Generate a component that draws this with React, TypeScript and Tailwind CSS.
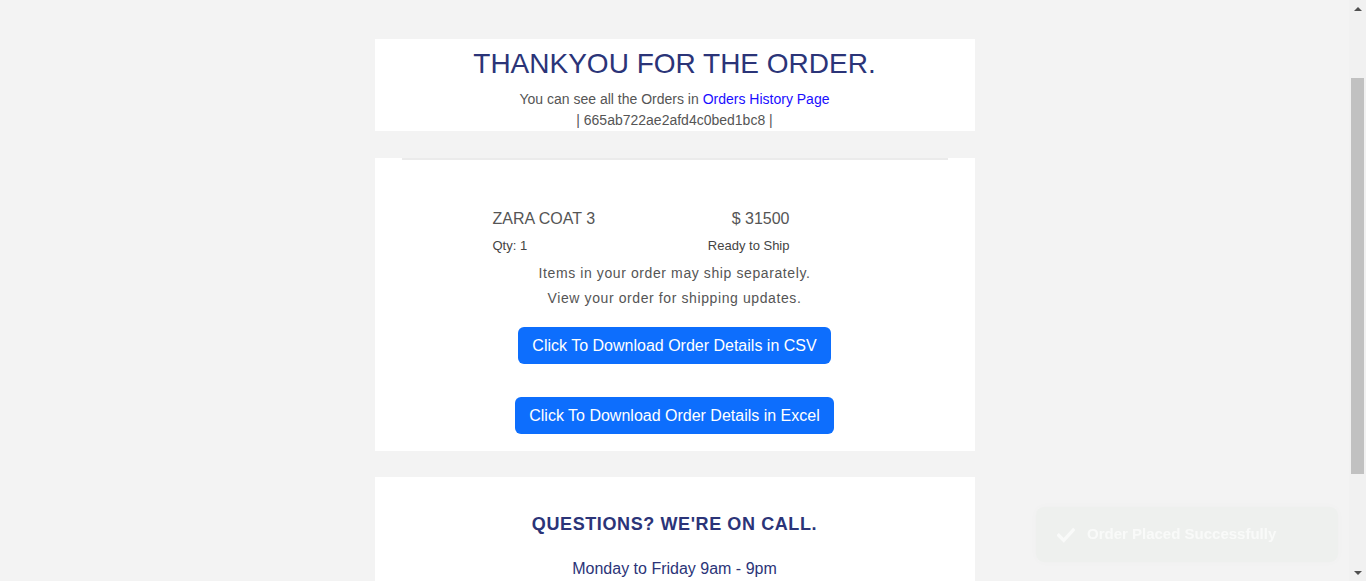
import React from 'react';

const navy = 'text-[#2b3478]';

const Toast = () => (
  <div className="fixed right-[28px] bottom-[19px] w-[302px] h-[55px] rounded-lg bg-[#eef0ee] shadow-[0_0_10px_rgba(0,0,0,0.02)] flex items-center pl-[21px] gap-[12px]">
    <svg width="18" height="18" viewBox="0 0 20 20" fill="none">
      <path d="M2 10.5 L7.5 16 L18 4.5" stroke="#f9faf9" strokeWidth="3.8" strokeLinecap="square" />
    </svg>
    <span className="text-[15px] font-bold text-[#f9faf9]">Order Placed Successfully</span>
  </div>
);

// the browser scrollbar seen in the screenshot
const ScrollBar = () => (
  <div className="fixed top-0 right-0 w-[17px] h-screen bg-[#f1f1f1] flex flex-col items-center">
    <div className="h-[17px] flex items-center justify-center">
      <div className="w-0 h-0 border-l-[4px] border-r-[4px] border-b-[4px] border-l-transparent border-r-transparent border-b-[#505050]" />
    </div>
    <div className="flex-1 w-full px-[2px]">
      <div className="mt-[61px] h-[396px] bg-[#c1c1c1]" />
    </div>
    <div className="h-[17px] flex items-center justify-center">
      <div className="w-0 h-0 border-l-[4px] border-r-[4px] border-t-[4px] border-l-transparent border-r-transparent border-t-[#505050]" />
    </div>
  </div>
);

export default function App() {
  return (
    <div className="min-h-screen bg-[#f3f3f3] pr-[17px] font-['Liberation_Sans',Arial,sans-serif]">
      <div className="w-[600px] mx-auto pt-[39px] pb-[60px] flex flex-col">
        {/* Thank you header */}
        <div className="bg-white pt-[8px] h-[92px] text-center">
          <h1 className={`text-[28px] leading-[34px] ${navy}`}>THANKYOU FOR THE ORDER.</h1>
          <p className="text-[14px] leading-[21px] text-[#555] mt-[8px]">
            You can see all the Orders in{' '}
            <a className="text-[#1a0dff]">Orders History Page</a>
          </p>
          <p className="text-[14px] leading-[21px] text-[#555]">| 665ab722ae2afd4c0bed1bc8 |</p>
        </div>

        {/* Order summary */}
        <div className="bg-white mt-[27px] pb-[17px]">
          <div className="mx-[27px] h-[2px] bg-[#ebebeb]" />
          <div className="ml-[118px] w-[297px] mt-[47px]">
            <div className="flex justify-between text-[16px] leading-[24px] text-[#555]">
              <span>ZARA COAT 3</span>
              <span>$ 31500</span>
            </div>
            <div className="flex justify-between text-[13px] leading-[18px] text-[#444] mt-[6px]">
              <span>Qty: 1</span>
              <span>Ready to Ship</span>
            </div>
          </div>
          <div className="text-center text-[14px] leading-[24px] tracking-[0.6px] text-[#555] mt-[6px]">
            <p>Items in your order may ship separately.</p>
            <p className="mt-[1px]">View your order for shipping updates.</p>
          </div>
          <div className="flex flex-col items-center mt-[17px] gap-[33px]">
            <button className="h-[37px] px-[14px] rounded-md bg-[#0d6efd] text-white text-[16px]">
              Click To Download Order Details in CSV
            </button>
            <button className="h-[37px] px-[14px] rounded-md bg-[#0d6efd] text-white text-[16px]">
              Click To Download Order Details in Excel
            </button>
          </div>
        </div>

        {/* Contact */}
        <div className="bg-white mt-[26px] pt-[35px] pb-[90px] text-center">
          <h2 className={`text-[18px] leading-[24px] font-bold tracking-[0.6px] ${navy}`}>
            QUESTIONS? WE'RE ON CALL.
          </h2>
          <p className={`text-[16px] leading-[24px] mt-[21px] ${navy}`}>Monday to Friday 9am - 9pm</p>
        </div>
      </div>
      <Toast />
      <ScrollBar />
    </div>
  );
}
